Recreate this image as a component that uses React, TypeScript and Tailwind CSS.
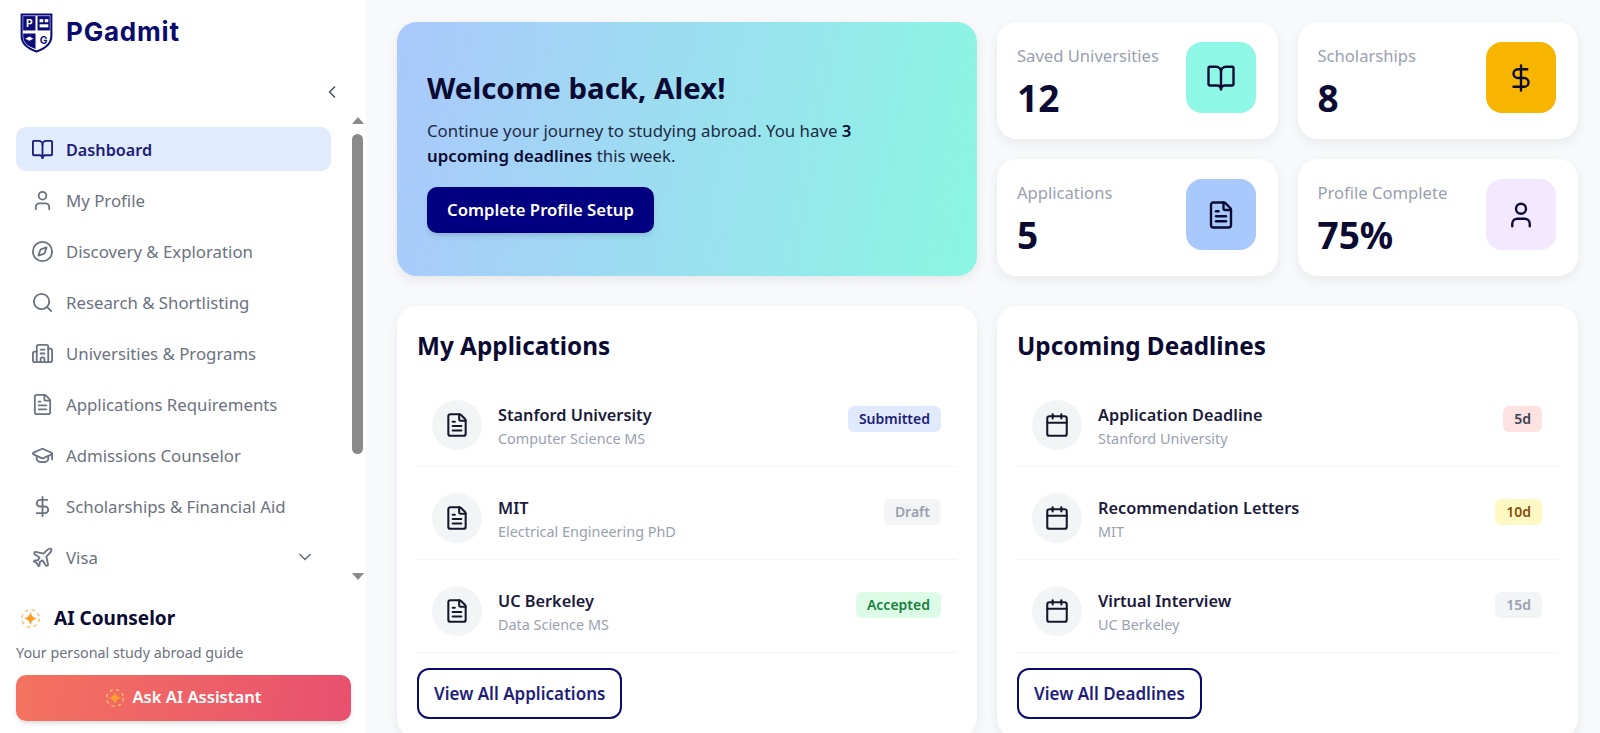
import {
  BookOpen,
  Building2,
  Calendar,
  ChevronDown,
  ChevronLeft,
  Compass,
  DollarSign,
  FileText,
  GraduationCap,
  Plane,
  Search,
  User,
} from 'lucide-react';

const navItems = [
  { icon: BookOpen, label: 'Dashboard', active: true },
  { icon: User, label: 'My Profile' },
  { icon: Compass, label: 'Discovery & Exploration' },
  { icon: Search, label: 'Research & Shortlisting' },
  { icon: Building2, label: 'Universities & Programs' },
  { icon: FileText, label: 'Applications Requirements' },
  { icon: GraduationCap, label: 'Admissions Counselor' },
  { icon: DollarSign, label: 'Scholarships & Financial Aid' },
  { icon: Plane, label: 'Visa', chevron: true },
];

const stats = [
  { label: 'Saved Universities', value: '12', icon: BookOpen, bg: 'bg-[#8ff7e6]' },
  { label: 'Scholarships', value: '8', icon: DollarSign, bg: 'bg-[#f7b500]' },
  { label: 'Applications', value: '5', icon: FileText, bg: 'bg-[#a9c8fc]' },
  { label: 'Profile Complete', value: '75%', icon: User, bg: 'bg-[#f3e8ff]' },
];

const applications = [
  { title: 'Stanford University', sub: 'Computer Science MS', badge: 'Submitted', tone: 'bg-[#e0eafc] text-[#1e1e7a]' },
  { title: 'MIT', sub: 'Electrical Engineering PhD', badge: 'Draft', tone: 'bg-gray-100 text-gray-400' },
  { title: 'UC Berkeley', sub: 'Data Science MS', badge: 'Accepted', tone: 'bg-[#dcfce7] text-[#15803d]' },
];

const deadlines = [
  { title: 'Application Deadline', sub: 'Stanford University', badge: '5d', tone: 'bg-[#fee2e2] text-[#374151]' },
  { title: 'Recommendation Letters', sub: 'MIT', badge: '10d', tone: 'bg-[#fef9c3] text-[#854d0e]' },
  { title: 'Virtual Interview', sub: 'UC Berkeley', badge: '15d', tone: 'bg-gray-100 text-gray-400' },
];

function Sparkle({ className }: { className?: string }) {
  return (
    <svg viewBox="0 0 24 24" className={className}>
      <circle cx="12" cy="12" r="10" fill="none" stroke="#fbbf6a" strokeWidth="1.6" strokeDasharray="4 4" />
      <path d="M12 4c.8 4.8 3.2 7.2 8 8-4.8.8-7.2 3.2-8 8-.8-4.8-3.2-7.2-8-8 4.8-.8 7.2-3.2 8-8z" fill="#fb9f2d" />
    </svg>
  );
}

function Logo() {
  return (
    <svg viewBox="0 0 32 40" className="w-[33px] h-[41px]">
      <path d="M1.5 2.5h29v21c0 8-7 12.500-14.500 15C8.500 36 1.500 31.500 1.500 23.500z" fill="#fff" stroke="#0b0b7a" strokeWidth="2" />
      <rect x="3" y="4" width="12" height="14" fill="#0b0b7a" />
      <rect x="17" y="4" width="12" height="14" fill="#0b0b7a" />
      <path d="M3 21h12v15c-6-2-12-5-12-12.500z" fill="#0b0b7a" />
      <text x="9" y="15" textAnchor="middle" fontSize="10" fontWeight="700" fill="#fff" fontFamily="Inter, sans-serif">P</text>
      <rect x="19" y="7" width="3.500" height="3" fill="#fff" />
      <rect x="24" y="7" width="3.500" height="3" fill="#fff" />
      <rect x="19" y="12" width="8.500" height="3" fill="#fff" />
      <path d="M5 26l4-2 4 2-4 2z" fill="#fff" />
      <text x="23" y="31" textAnchor="middle" fontSize="10" fontWeight="700" fill="#0b0b7a" fontFamily="Inter, sans-serif">G</text>
    </svg>
  );
}

function Sidebar() {
  return (
    <aside className="w-[366px] shrink-0 h-full bg-white flex flex-col">
      <div className="flex items-center gap-[13px] pl-5 pt-[11px] h-[54px]">
        <Logo />
        <span className="font-['Inter',sans-serif] text-[26px] font-bold text-[#0b0b6e] tracking-[0.8px] pb-[2px]">PGadmit</span>
      </div>
      <div className="flex justify-end pr-[24px] mt-[28px] h-5">
        <ChevronLeft className="w-[20px] h-[20px] text-gray-600" />
      </div>
      <div className="flex h-[472px] mt-[11px] overflow-hidden">
        <nav className="w-[347px] pl-4 pr-[16px] pt-[14px] flex flex-col gap-[7px]">
          {navItems.map((item) => (
            <div
              key={item.label}
              className={
                item.active
                  ? 'h-[44px] shrink-0 flex items-center gap-[13px] pl-[15px] pr-4 rounded-[10px] bg-[#e0ebfd] text-[#1e1e7a] font-semibold'
                  : 'h-[44px] shrink-0 flex items-center gap-[13px] pl-[15px] pr-4 rounded-[10px] text-[#6b7280]'
              }
            >
              <item.icon className="w-[23px] h-[23px] shrink-0 -ml-[0.5px] -mr-[0.5px]" strokeWidth={1.9} />
              <span className={item.active ? 'text-[16.2px] pt-[2px]' : 'text-[16.8px] pt-[2px]'}>{item.label}</span>
              {item.chevron && <ChevronDown className="w-[20px] h-[20px] ml-auto" />}
            </div>
          ))}
        </nav>
        <div className="w-[13px] ml-[4px] flex flex-col items-center">
          <div className="mt-[4px] w-0 h-0 border-x-[6px] border-x-transparent border-b-[7px] border-b-[#8a8a8a]" />
          <div className="mt-[10px] w-[11px] h-[320px] rounded-full bg-[#8a8a8a]" />
          <div className="mt-auto mb-[5px] w-0 h-0 border-x-[6px] border-x-transparent border-t-[7px] border-t-[#8a8a8a]" />
        </div>
      </div>
      <div className="pl-4 pr-[15px] pt-[19px]">
        <div className="flex items-center gap-[13px] pl-1">
          <Sparkle className="w-[21px] h-[21px]" />
          <span className="text-[19px] font-bold text-[#0a0a33]">AI Counselor</span>
        </div>
        <p className="mt-[9px] text-[14.3px] text-[#6b7280]">Your personal study abroad guide</p>
        <button className="mt-[12px] w-full h-[46px] rounded-[10px] bg-[linear-gradient(100deg,#f4735f,#e8506f)] text-white text-[16.6px] font-semibold flex items-center justify-center gap-[7px] shadow-md">
          <Sparkle className="w-[20px] h-[20px]" />
          Ask AI Assistant
        </button>
      </div>
    </aside>
  );
}

function StatCard({ stat }: { stat: (typeof stats)[number] }) {
  return (
    <div className="h-[117px] bg-white rounded-[20px] shadow-[0_4px_12px_rgba(15,23,42,0.07)] pl-5 pr-[22px] flex justify-between items-start">
      <div className="pt-[22px]">
        <div className="text-[16.6px] leading-6 text-gray-400">{stat.label}</div>
        <div className="mt-2 text-[37px] leading-[44px] font-bold text-[#0a0a33]">{stat.value}</div>
      </div>
      <div className={`mt-5 w-[70px] h-[71px] rounded-2xl flex items-center justify-center ${stat.bg}`}>
        <stat.icon className="w-[30px] h-[30px] text-[#0a0a33]" strokeWidth={1.9} />
      </div>
    </div>
  );
}

type Row = { title: string; sub: string; badge: string; tone: string };

function ListCard({ title, rows, icon: Icon, action }: { title: string; rows: Row[]; icon: typeof FileText; action: string }) {
  return (
    <section className="bg-white rounded-[20px] shadow-[0_4px_12px_rgba(15,23,42,0.07)] p-5 h-[432px]">
      <h2 className="text-[24.3px] leading-[40px] font-bold text-[#0a0a33]">{title}</h2>
      <div className="mt-2">
        {rows.map((row) => (
          <div key={row.title} className="h-[93px] pt-[9px] border-b border-gray-100 flex items-center pl-[15px] pr-[16px]">
            <div className="w-[50px] h-[50px] rounded-full bg-gray-100 flex items-center justify-center shrink-0">
              <Icon className="w-[26px] h-[26px] text-[#17172b]" strokeWidth={1.9} />
            </div>
            <div className="ml-[16px] pt-[5px]">
              <div className="text-[16.3px] leading-6 font-semibold text-[#1a1a3a]">{row.title}</div>
              <div className="text-[14.4px] leading-6 text-gray-400">{row.sub}</div>
            </div>
            <span className={`ml-auto self-start mt-[23px] h-[26px] px-[11px] pb-[1px] rounded-md flex items-center text-[14px] font-semibold ${row.tone}`}>
              {row.badge}
            </span>
          </div>
        ))}
      </div>
      <button className="mt-[15px] h-[51px] px-[15px] rounded-[12px] border-2 border-[#0b0b6e] text-[17px] font-semibold text-[#1e1e7a]">
        {action}
      </button>
    </section>
  );
}

export default function App() {
  return (
    <div className="h-screen overflow-hidden flex bg-[#f8f9fb] font-['Noto_Sans',sans-serif]">
      <Sidebar />
      <main className="flex-1 pl-[31px] pr-[22px] pt-[22px]">
        <div className="grid grid-cols-[580px_581px] gap-x-5 gap-y-[30px]">
          <div className="h-[254px] rounded-[20px] bg-[linear-gradient(100deg,#aac8fc,#8cf6e3)] shadow-[0_4px_12px_rgba(15,23,42,0.08)] px-[30px] pt-[44px]">
            <h1 className="text-[29.4px] leading-[44px] font-bold text-[#0a0a33]">Welcome back, Alex!</h1>
            <p className="mt-[8px] text-[16.8px] leading-[25px] text-[#1f2a44] w-[460px]">
              Continue your journey to studying abroad. You have <strong className="font-semibold text-[#0a0a33]">3 upcoming deadlines</strong> this week.
            </p>
            <button className="mt-[19px] h-[46px] w-[227px] rounded-[10px] bg-[#000080] text-white text-[16.7px] font-semibold shadow-md">
              Complete Profile Setup
            </button>
          </div>
          <div className="grid grid-cols-2 gap-5">
            {stats.map((stat) => (
              <StatCard key={stat.label} stat={stat} />
            ))}
          </div>
          <ListCard title="My Applications" rows={applications} icon={FileText} action="View All Applications" />
          <ListCard title="Upcoming Deadlines" rows={deadlines} icon={Calendar} action="View All Deadlines" />
        </div>
      </main>
    </div>
  );
}
